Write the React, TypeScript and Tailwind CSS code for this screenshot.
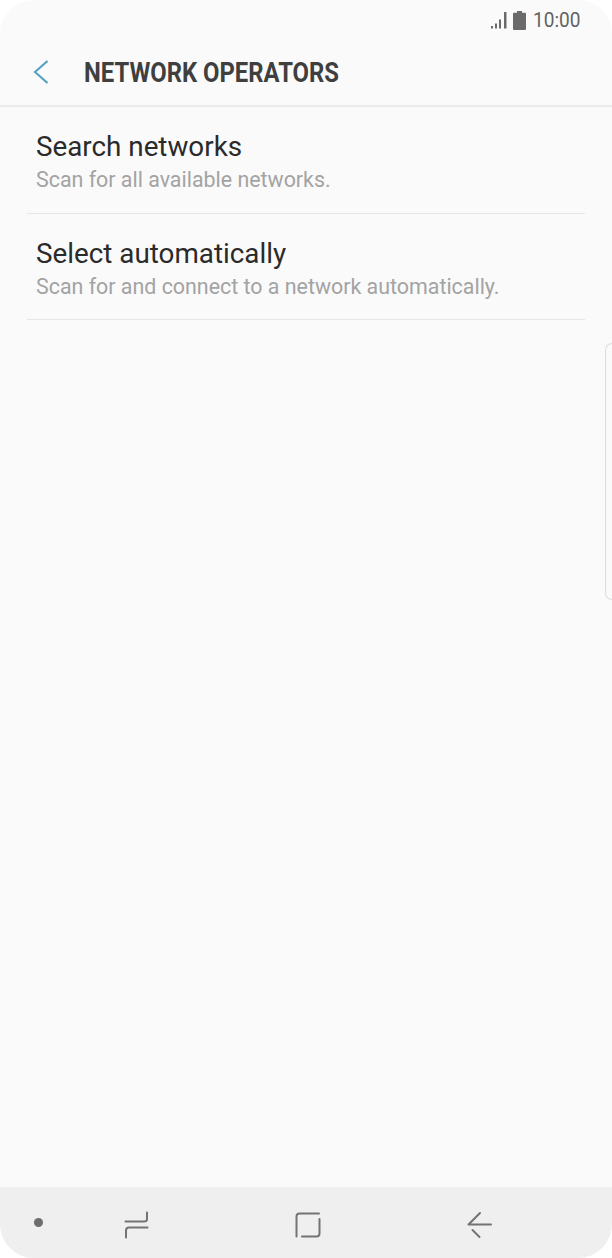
const Row = ({ title, subtitle, className }: { title: string; subtitle: string; className: string }) => {
  return (
    <div className={`flex flex-col border-b border-[#e6e6e6] pl-[9px] pt-[23px] ${className}`}>
      <div className="text-[27.8px] leading-[34px] text-[#2a2a2a]">{title}</div>
      <div className="text-[21.4px] leading-[32px] text-[#a3a3a3]">{subtitle}</div>
    </div>
  );
};

const StatusBar = () => {
  return (
    <div className="flex h-[40px] items-center justify-end pr-[32px]">
      <svg width="20" height="18" viewBox="0 0 20 18" className="mr-[4px] mt-[1px]">
        <g fill="#6a6a6a">
          <rect x="2" y="14" width="2" height="2.500" />
          <rect x="6" y="11.500" width="2" height="5" />
          <rect x="10" y="7.500" width="2" height="9" />
          <rect x="15" y="0" width="2.500" height="16.500" />
        </g>
      </svg>
      <svg width="13" height="19" viewBox="0 0 13 19" className="mr-[7px]">
        <path d="M4 0h5v1.800h3a1 1 0 0 1 1 1V18a1 1 0 0 1-1 1H1a1 1 0 0 1-1-1V2.800a1 1 0 0 1 1-1h3z" fill="#6a6a6a" />
      </svg>
      <span className="mt-[1px] w-[47px] origin-left scale-x-[0.93] whitespace-nowrap text-[20.500px] leading-none text-[#626262]">
        10:00
      </span>
    </div>
  );
};

const Header = () => {
  return (
    <div className="flex h-[67px] items-center border-b-2 border-[#ebebeb] pl-[33px]">
      <svg width="16" height="26" viewBox="0 0 16 26" className="-mt-[2px]">
        <path d="M14.500 2 L2 13 L14.500 24" fill="none" stroke="#4f9fbd" strokeWidth="2" />
      </svg>
      <span className="ml-[35px] mt-[1px] origin-left scale-x-[0.883] whitespace-nowrap text-[27px] font-bold leading-none text-[#3f3f3f]">
        NETWORK OPERATORS
      </span>
    </div>
  );
};

const NavBar = () => {
  return (
    <div className="flex h-[71px] items-center bg-[#efefef] pt-[4px]">
      <div className="-mt-[4px] ml-[34px] h-[9px] w-[9px] rounded-full bg-[#6e6e6e]" />
      <svg width="26" height="28" viewBox="0 0 26 28" className="ml-[81px]">
        <path
          d="M1.500 10.500H20Q23 10.500 23 8V1.500M23.500 16.500H5Q2 16.500 2 19.500V26.500"
          fill="none"
          stroke="#737373"
          strokeWidth="2"
          strokeLinecap="round"
        />
      </svg>
      <svg width="26" height="26" viewBox="0 0 26 26" className="ml-[145px]">
        <path
          d="M1.500 24.500V4.500Q1.500 1.500 4.500 1.500H24M24.500 7V21.500Q24.500 24.500 21.500 24.500H7"
          fill="none"
          stroke="#737373"
          strokeWidth="2"
          strokeLinecap="round"
        />
      </svg>
      <svg width="26" height="28" viewBox="0 0 26 28" className="ml-[146px]">
        <path
          d="M13 2L1.500 13.500H24M5.500 19L12.500 26"
          fill="none"
          stroke="#737373"
          strokeWidth="2"
          strokeLinecap="round"
          strokeLinejoin="round"
        />
      </svg>
    </div>
  );
};

const App = () => {
  return (
    <div className="h-[1258px] w-[612px] overflow-hidden bg-white font-['Roboto',sans-serif]">
      <div className="relative flex h-full flex-col overflow-hidden rounded-[34px] bg-[#fafafa]">
        <StatusBar />
        <Header />
        <div className="flex-1 px-[27px]">
          <Row className="h-[107px]" title="Search networks" subtitle="Scan for all available networks." />
          <Row className="h-[106px]" title="Select automatically" subtitle="Scan for and connect to a network automatically." />
        </div>
        <NavBar />
        {/* edge panel handle */}
        <div className="absolute right-0 top-[343px] h-[257px] w-[7px] rounded-l-[8px] border border-r-0 border-[#dcdcdc]" />
      </div>
    </div>
  );
};

export default App;
